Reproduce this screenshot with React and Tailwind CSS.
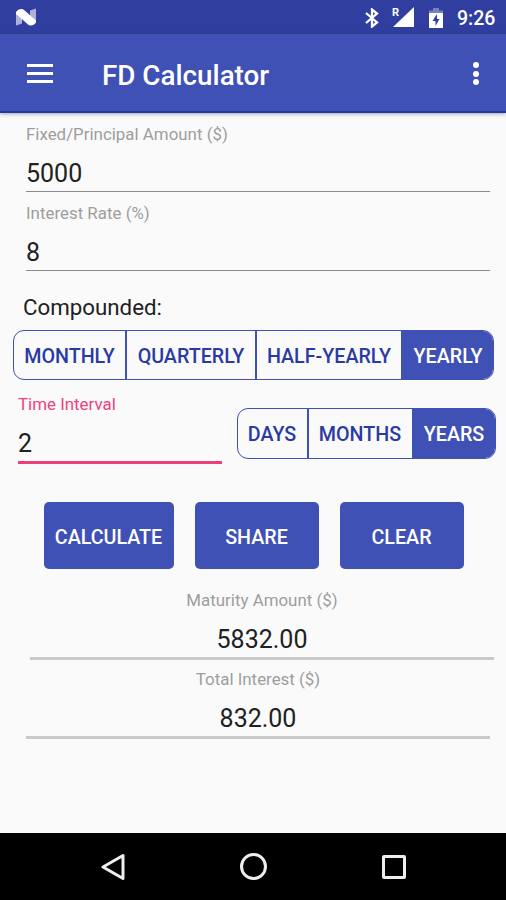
import React, { useState } from 'react'

function StatusBar() {
  return (
    <div className="flex h-[34px] shrink-0 items-center bg-[#303f9f] text-white">
      <svg className="ml-[15px] h-[18px] w-[22px]" viewBox="0 0 22 18">
        <path d="M1 4l6 3v8.500L1 17.500zM15 2.500l6-2V14l-6-3z" fill="#fff" opacity=".6" />
        <path d="M1 4Q3 1 6.500 1Q8 1 9 2L21 12.500v2Q19 17.500 15.500 17.500Q14 17.500 13 16.500L1 6z" fill="#fff" />
      </svg>
      <div className="ml-auto flex items-center pt-[2px]">
        <svg className="h-[20px] w-[14px]" viewBox="0 0 14 20" fill="none" stroke="#fff" strokeWidth="2.300">
          <path d="M1 5l11 9.500L7 18.500v-17L12 5.500 1 15" />
        </svg>
        <svg className="mb-[2px] ml-[13px] h-[22px] w-[23px]" viewBox="0 0 23 22">
          <path d="M22 1v20H1z" fill="#fff" />
          <text x="0" y="9.500" fontSize="11" fontWeight="700" fontFamily="Roboto, sans-serif" fill="#fff" stroke="#303f9f" strokeWidth="2" paintOrder="stroke">R</text>
        </svg>
        <svg className="ml-[14px] h-[20px] w-[14px]" viewBox="0 0 14 20">
          <path d="M0 5V2.500h4V0h6v2.500h4V5z" fill="#fff" opacity=".35" />
          <path d="M0 5h14v15H0z" fill="#fff" />
          <path d="M8 6l-4.500 7H6.500v5L10.500 11H8z" fill="#303f9f" />
        </svg>
        <span className="ml-[14px] mr-[11px] w-[38px] whitespace-nowrap pt-[1px] text-[19.500px] font-medium leading-none">9:26</span>
      </div>
    </div>
  )
}

function AppBar() {
  return (
    <div className="z-10 flex h-[79px] shrink-0 items-center border-b-2 border-[#2238a0] bg-[#3f51b5] text-white shadow-[0_1px_4px_rgba(0,0,0,0.35)]">
      <div className="ml-[27px] mt-[1px] flex w-[26px] flex-col gap-[5px]">
        <span className="h-[3px] bg-white" />
        <span className="h-[3px] bg-white" />
        <span className="h-[3px] bg-white" />
      </div>
      <h1 className="ml-[49px] mt-[6px] text-[27.800px] font-medium leading-none">FD Calculator</h1>
      <div className="ml-auto mr-[27px] mt-[2px] flex flex-col gap-[2.500px]">
        <span className="size-[6px] rounded-full bg-white" />
        <span className="size-[6px] rounded-full bg-white" />
        <span className="size-[6px] rounded-full bg-white" />
      </div>
    </div>
  )
}

function Field({ label, value, className, labelClass = 'text-[#9e9e9e]', lineClass = 'h-[48px] border-b-[1.500px] border-[#8a8a8a]' }) {
  return (
    <div className={'flex h-[79px] flex-col ' + className}>
      <div className={'h-[20px] text-[16.900px] leading-[20px] ' + labelClass}>{label}</div>
      <div className={'flex items-center pt-[12px] text-[25px] leading-none text-[#212121] ' + lineClass}>
        <span>{value}</span>
      </div>
    </div>
  )
}

function Segmented({ options, selected, onSelect, className }) {
  return (
    <div className={'flex shrink-0 overflow-hidden rounded-[11px] border-[1.500px] border-[#3f51b5] ' + className}>
      {options.map((o, i) => (
        <button
          key={o.name}
          onClick={() => onSelect(o.name)}
          className={
            'shrink-0 whitespace-nowrap pt-[3px] text-[19.700px] font-medium leading-none ' +
            o.width +
            (i > 0 ? ' border-l-2 border-[#3f51b5]' : '') +
            (o.name === selected ? ' bg-[#3f51b5] text-white' : ' text-[#2a3aa5]')
          }
        >
          {o.name}
        </button>
      ))}
    </div>
  )
}

const periods = [
  { name: 'MONTHLY', width: 'w-[111px]' },
  { name: 'QUARTERLY', width: 'w-[130px]' },
  { name: 'HALF-YEARLY', width: 'w-[146px]' },
  { name: 'YEARLY', width: 'w-[92px]' },
]

const units = [
  { name: 'DAYS', width: 'w-[69px]' },
  { name: 'MONTHS', width: 'w-[105px]' },
  { name: 'YEARS', width: 'w-[83px]' },
]

export default function App() {
  const [period, setPeriod] = useState('YEARLY')
  const [unit, setUnit] = useState('YEARS')

  return (
    <div className="flex h-[900px] w-[506px] flex-col overflow-hidden bg-[#fafafa] font-[Roboto,sans-serif]">
      <StatusBar />
      <AppBar />

      <main className="flex-1 pt-[11px]">
        <Field label="Fixed/Principal Amount ($)" value="5000" className="ml-[26px] w-[464px]" />
        <Field label="Interest Rate (%)" value="8" className="ml-[26px] w-[464px]" />

        <div className="ml-[23px] mt-[11px] h-[37px] text-[22.300px] leading-[28px] text-[#212121]">Compounded:</div>
        <Segmented options={periods} selected={period} onSelect={setPeriod} className="ml-[13px] h-[50px] w-[481px]" />

        <div className="flex pl-[18px] pt-[14px]">
          <Field
            label="Time Interval"
            value="2"
            className="w-[204px]"
            labelClass="text-[#f0427c]"
            lineClass="h-[50px] border-b-[3px] border-[#ec407a]"
          />
          <Segmented options={units} selected={unit} onSelect={setUnit} className="ml-[14.500px] mt-[14px] h-[51px] w-[259px]" />
        </div>

        <div className="ml-[43.500px] mt-[29px] flex h-[67px] gap-[21px] text-[19.700px] font-medium leading-none text-white">
          <button className="w-[130px] rounded-[5px] bg-[#3f51b5] pt-[4px]">CALCULATE</button>
          <button className="w-[124px] rounded-[5px] bg-[#3f51b5] pt-[4px]">SHARE</button>
          <button className="w-[124px] rounded-[5px] bg-[#3f51b5] pt-[4px]">CLEAR</button>
        </div>

        <div className="mt-[21px]">
          <Field
            label="Maturity Amount ($)"
            value="5832.00"
            className="ml-[30px] w-[464px] text-center"
            lineClass="h-[50px] justify-center border-b-[3px] border-[#cacaca]"
          />
          <Field
            label="Total Interest ($)"
            value="832.00"
            className="ml-[26px] w-[464px] text-center"
            lineClass="h-[50px] justify-center border-b-[3px] border-[#cacaca]"
          />
        </div>
      </main>

      <nav className="flex h-[67px] shrink-0 items-center bg-black pl-[101px]">
        <svg className="h-[28px] w-[24px]" viewBox="0 0 24 28" fill="none" stroke="#eee" strokeWidth="3" strokeLinejoin="round">
          <path d="M22 2.500v23L2 14z" />
        </svg>
        <span className="ml-[115px] size-[27px] rounded-full border-[3px] border-[#eee]" />
        <span className="ml-[115px] size-[24px] rounded-[2px] border-[3px] border-[#eee]" />
      </nav>
    </div>
  )
}
